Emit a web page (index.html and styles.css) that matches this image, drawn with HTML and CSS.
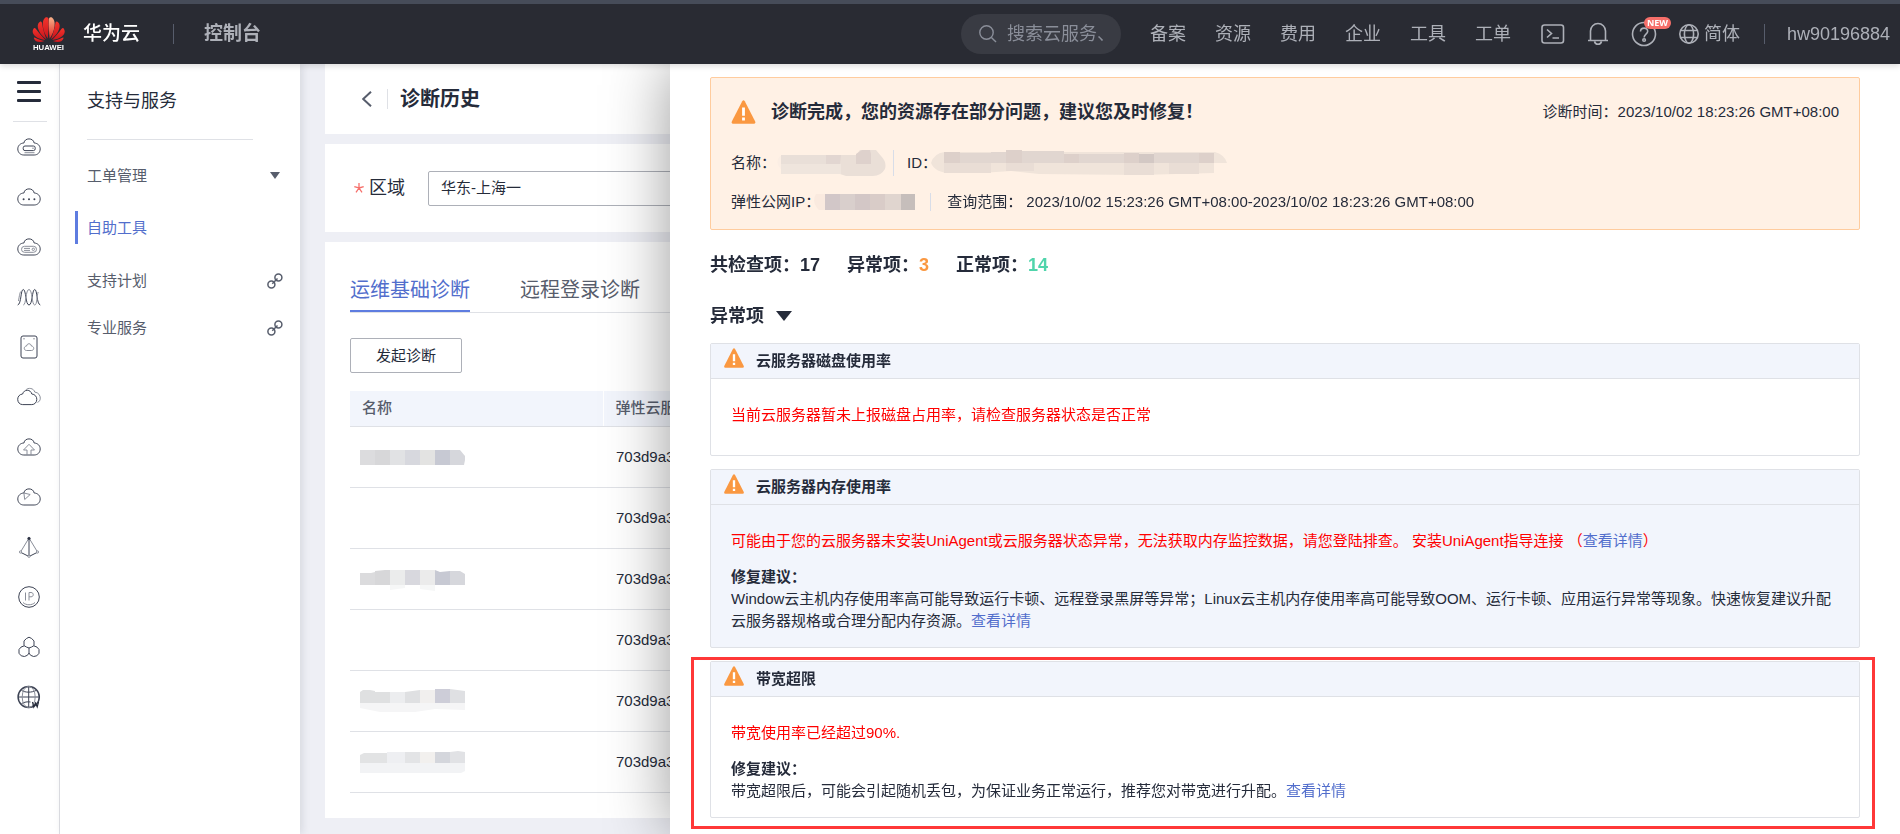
FILE: index.html
```html
<!DOCTYPE html>
<html lang="zh-CN">
<head>
<meta charset="utf-8">
<title>诊断历史</title>
<link rel="stylesheet" href="styles.css">
</head>
<body>
<svg class="defs" aria-hidden="true">
  <symbol id="cloud" viewBox="0 0 24 24"><path d="M6.900 8C7.400 5.200 9.400 3.900 12 3.900s4.600 1.300 5.200 4.100c3.600.2 6 2.700 6 5.900 0 3.600-2.600 6.100-6 6.100H6.800c-3.400 0-6-2.500-6-6.100 0-3.200 2.600-5.800 6.100-5.900z"/></symbol>
  <symbol id="link" viewBox="0 0 16 16"><circle cx="11.400" cy="4.600" r="3.500"/><circle cx="4.400" cy="11.600" r="3.500"/><path d="M5.300 10.700l5.200-5.200"/></symbol>
  <symbol id="warn" viewBox="0 0 24 24"><path fill="#fa9841" d="M10.700 1.200Q12 -.8 13.300 1.200L23.700 21.600Q24.300 23.700 22.300 23.700H1.700Q-.3 23.700 .3 21.600Z"/><path fill="#fff" d="M10.600 7.500h2.800v8.300h-2.800zM10.600 17.600h2.800v2.900h-2.800z"/></symbol>
</svg>

<header class="topbar">
  <a class="brand" href="#">
    <svg class="logo" viewBox="0 0 34 36" aria-hidden="true">
      <defs>
        <linearGradient id="petal" x1="0" y1="0" x2="0" y2="1"><stop offset="0" stop-color="#f4352c"/><stop offset="1" stop-color="#c8141c"/></linearGradient>
        <linearGradient id="petal-lit" x1="0" y1="0" x2="0" y2="1"><stop offset="0" stop-color="#f9b48c"/><stop offset="1" stop-color="#e5251f"/></linearGradient>
      </defs>
      <g fill="url(#petal)">
        <path d="M16.200 22.600C10.500 14.600 9.300 3.800 13.800 .9c2.600-.8 3.200.4 3.300 2.200.3 7.500-.2 13.600-.9 19.500z"/>
        <path fill="url(#petal-lit)" d="M18.200 22.600C23.900 14.600 25.100 3.800 20.600.9 18 .1 17.500 1.300 17.400 3.100c-.3 7.500.1 13.600.8 19.500z"/>
        <path d="M14.900 23.500C8.300 19 4.300 11.500 6.500 7.300 9.100 3.700 10 5.500 10.300 6.900c1 5.800 2.500 11.300 4.600 16.600z"/>
        <path d="M19.500 23.500C26.100 19 30.100 11.500 27.900 7.300 25.300 3.700 24.400 5.500 24.100 6.900c-1 5.800-2.500 11.300-4.600 16.600z"/>
        <path d="M13.700 24.300C6 23.400 .2 19.300.7 15c.9-4.200 2.100-3.500 3.200-2.300 3 4.200 6.200 8 9.800 11.600z"/>
        <path d="M20.700 24.300c7.700-.9 13.500-5 13-9.300-.9-4.200-2.100-3.500-3.200-2.300-3 4.200-6.200 8-9.800 11.600z"/>
        <path d="M12.900 25.200c-4.800 2.100-9.600 1.400-10.900-2.800-.3-1.100.6-.9 1.700-.3 2.900 1.500 5.800 2.500 9.200 3.100z"/>
        <path d="M21.500 25.200c4.800 2.100 9.600 1.400 10.900-2.800.3-1.100-.6-.9-1.700-.3-2.900 1.500-5.800 2.500-9.200 3.100z"/>
      </g>
      <text x="17" y="35" text-anchor="middle" class="logo-text">HUAWEI</text>
    </svg>
    <span class="brand-name">华为云</span>
  </a>
  <a class="console" href="#">控制台</a>
  <label class="search">
    <svg class="icon line" width="18" height="18" viewBox="0 0 18 18" aria-hidden="true"><circle cx="7.500" cy="7.500" r="6.700"/><path d="M12.400 12.400L17 17"/></svg>
    <input type="text" aria-label="搜索" placeholder="搜索云服务、">
  </label>
  <nav class="topnav">
    <a href="#">备案</a><a href="#">资源</a><a href="#">费用</a><a href="#">企业</a><a href="#">工具</a><a href="#">工单</a>
  </nav>
  <div class="tools">
    <button aria-label="命令行"><svg class="icon bold" width="24" height="20" viewBox="0 0 24 20"><rect x="1" y="1" width="21.500" height="18" rx="2.500"/><path d="M6 5.500l4.500 4L6 13.500M11.500 14h6.500"/></svg></button>
    <button aria-label="消息"><svg class="icon bold" width="22" height="24" viewBox="0 0 22 24"><path d="M1 18.500h20M3.500 18.300V9a7.500 7.500 0 0 1 15 0v9.300M7.500 19.500a3.600 3.600 0 0 0 7 0"/></svg></button>
    <button class="help" aria-label="帮助"><svg class="icon bold" width="26" height="26" viewBox="0 0 26 26"><circle cx="13" cy="13" r="11.500"/><path d="M9.500 10.600c0-4.600 7.200-4.600 7.200-.3 0 3-3.600 2.900-3.600 6.300"/><circle cx="13.100" cy="19" r="1.300"/></svg><span class="badge">NEW</span></button>
    <button class="lang"><svg class="icon bold" width="20" height="20" viewBox="0 0 20 20" aria-hidden="true"><circle cx="10" cy="10" r="9.200"/><ellipse cx="10" cy="10" rx="4.600" ry="9.200"/><path d="M1.800 6.500h16.400M1.800 13.500h16.400"/></svg>简体</button>
  </div>
  <a class="account" href="#">hw90196884</a>
</header>

<div class="page">
  <nav class="rail" aria-label="服务">
    <button class="menu" aria-label="菜单"><i></i><i></i><i></i></button>
    <ul>
      <li><a href="#" aria-label="弹性云服务器"><svg class="ri" viewBox="0 0 24 24"><use href="#cloud"/><rect x="6.200" y="11" width="12" height="4.600" rx="1.800"/><path class="thin" d="M7.500 17.700h10"/><path d="M15.500 13.200h1"/></svg></a></li>
      <li><a href="#" aria-label="云服务"><svg class="ri" viewBox="0 0 24 24"><use href="#cloud"/><path class="dots" d="M6.600 14.200h.01M12 14.200h.01M17.400 14.200h.01"/></svg></a></li>
      <li><a href="#" aria-label="裸金属服务器"><svg class="ri" viewBox="0 0 24 24"><use href="#cloud"/><rect class="thin" x="4.500" y="11.300" width="15" height="6" rx="3"/><path class="thin" d="M7 13.400h6M7 15.400h6"/><circle class="thin" cx="16.300" cy="14.300" r="1.200"/></svg></a></li>
      <li><a href="#" aria-label="弹性伸缩"><svg class="ri" viewBox="0 0 24 24"><path d="M.7 20C4.500 19 3.500 4.500 6.300 4.500S8.500 20 12 20 15 4.500 17.700 4.500 19.500 19 23.300 20"/><path class="thin" d="M1.500 16C2.500 10 3 6 4.500 6.500M6.300 20c3 0 2.200-15.500 5.700-15.500S14.700 20 17.700 20c2.500 0 2-9 3.500-13"/></svg></a></li>
      <li><a href="#" aria-label="云硬盘"><svg class="ri" viewBox="0 0 24 24"><rect x="4" y="1" width="16" height="22" rx="2"/><path d="M6.500 3.800h1M16.500 3.800h1"/><path class="thin" d="M9.600 11c.4-3 4.400-3 4.800 0 3.200.4 3 4.500 0 4.500H9.600c-3 0-3.200-4.200 0-4.500z"/></svg></a></li>
      <li><a href="#" aria-label="专属云"><svg class="ri" viewBox="0 0 24 24"><path d="M5.600 9c.8-2.600 2.600-3.700 4.700-3.700S14.200 6.600 14.800 9c3 .2 5 2.500 5 5.300 0 3.100-2.200 5.300-5 5.300H5.700c-2.900 0-5-2.200-5-5.300C.7 11.500 2.700 9.200 5.600 9z"/><path class="thin" d="M8.500 5.300c2.800-3.300 8.300-2.100 9.300 1.800 3.800.3 5.500 3.600 5.500 6.100 0 2-1.100 3.600-2.800 4.200"/></svg></a></li>
      <li><a href="#" aria-label="对象存储"><svg class="ri" viewBox="0 0 24 24"><use href="#cloud"/><path class="thin" d="M10 20v-5H6.500L12 9.300l5.500 5.700H14v5"/></svg></a></li>
      <li><a href="#" aria-label="云监控"><svg class="ri" viewBox="0 0 24 24"><use href="#cloud"/><path class="thin" d="M6.900 8l6.300 1.500-5.500 5z"/></svg></a></li>
      <li><a href="#" aria-label="虚拟私有云"><svg class="ri" viewBox="0 0 24 24"><path d="M12 3v18M4 17.500l8 4 8-4"/><path class="thin" d="M12 3L3.500 17M12 3l8.500 14"/><circle class="solid" cx="12" cy="3.500" r="1.200"/><circle class="node" cx="3.500" cy="17" r="1.100"/><circle class="node" cx="20.500" cy="17" r="1.100"/><circle class="node" cx="12" cy="21.300" r="1.100"/></svg></a></li>
      <li><a href="#" aria-label="弹性公网IP"><svg class="ri" viewBox="0 0 24 24"><circle cx="12" cy="12" r="10.300"/><path class="thin" d="M8.500 7.500v8M12 15.500v-8h2c3 0 3 4.300 0 4.300h-2M6 17.500c3 3 9 3 12 0"/></svg></a></li>
      <li><a href="#" aria-label="区块链"><svg class="ri" viewBox="0 0 24 24"><path d="M9.500 3.500L12 2.200l2.600 1.300 2.400 2.400v4.700L14.600 12 12 13l-2.600-1L7 10.600V5.900zM7 10.900l-3 1.200-2 2.400v3.800l2.200 2.500 3.200.7 3-1.200L12 18v-5M17 10.900l3 1.200 2 2.400v3.800l-2.200 2.500-3.200.7-3-1.200L12 18"/></svg></a></li>
      <li><a href="#" aria-label="域名"><svg class="ri" viewBox="0 0 24 24"><circle class="ring" cx="11.700" cy="12" r="10.600"/><path d="M11.700 1.400v21.200M1.100 12h21.200M4.500 5.500c4 2.200 10 2.200 14.500 0M4.500 18.500c3-1.500 6-2 9-1.500"/><ellipse class="thin" cx="11.700" cy="12" rx="6.500" ry="10.600"/><path class="w" d="M15.500 17l1.300 5 1.700-4 1.700 4 1.300-5"/></svg></a></li>
    </ul>
  </nav>

  <aside class="panel">
    <h2>支持与服务</h2>
    <ul>
      <li class="lead"><a href="#">工单管理<svg class="caret" width="10" height="7" viewBox="0 0 10 7" aria-hidden="true"><path d="M0 0h10L5 7z"/></svg></a></li>
      <li class="current"><a href="#">自助工具</a></li>
      <li class="after"><a href="#">支持计划<svg class="chain"><use href="#link"/></svg></a></li>
      <li><a href="#">专业服务<svg class="chain"><use href="#link"/></svg></a></li>
    </ul>
  </aside>

  <main class="main">
    <section class="card title-card">
      <button class="back" aria-label="返回"><svg width="10" height="16" viewBox="0 0 10 16"><path d="M9 .7L1.200 8 9 15.300"/></svg></button>
      <h1>诊断历史</h1>
    </section>
    <section class="card region-card">
      <label for="region"><svg class="star" width="10" height="10" viewBox="0 0 10 10" aria-hidden="true"><path d="M5 0v5L.3 3.700M5 5l4.700-1.300M5 5L2 9.300M5 5l3 4.300"/></svg>区域</label>
      <select id="region"><option>华东-上海一</option></select>
    </section>
    <section class="card list-card">
      <div class="tabs"><button class="tab on">运维基础诊断</button><button class="tab">远程登录诊断</button></div>
      <button class="start">发起诊断</button>
      <table>
        <thead><tr><th class="c-name">名称</th><th>弹性云服务器</th></tr></thead>
        <tbody>
          <tr><td><svg class="mosaic" viewBox="0 0 105 22"><g><path fill="#dcdcde" d="M0 4h15v15H0z"/><path fill="#d7d7d9" d="M15 4h15v15H15z"/><path fill="#e1e2e4" d="M30 4h15v15H30z"/><path fill="#d7d8de" d="M45 4h15v15H45z"/><path fill="#e3e3e2" d="M60 4h15v15H60z"/><path fill="#c7c9d3" d="M75 4h15v15H75z"/><path fill="#d6d7dc" d="M90 4h10l5 6v4l-1 5H90z"/></g></svg></td><td>703d9a3b</td></tr>
          <tr><td></td><td>703d9a3b</td></tr>
          <tr><td><svg class="mosaic" viewBox="0 0 105 22"><path fill="#dbdbdd" d="M0 5h11l4-1v13H0z"/><path fill="#d7d7d9" d="M15 3l10-1h5v15H15z"/><path fill="#ebecec" d="M30 2h15v15H30z"/><path fill="#d8d8de" d="M45 2h15v15H45z"/><path fill="#ebebeb" d="M60 2h15v15H60z"/><path fill="#c7c9d3" d="M75 2l5 2 10-1v14H75z"/><path fill="#d6d7dc" d="M90 3h10l5 3v11H90z"/><path fill="#f6f7f7" d="M30 17h15v3l-15 2zM60 17h15v6l-15-2z"/></svg></td><td>703d9a3b</td></tr>
          <tr><td></td><td>703d9a3b</td></tr>
          <tr><td><svg class="mosaic" viewBox="0 0 105 22"><path fill="#dfe0e1" d="M0 2l3-2h7l5 1v12H0zM15 2h15v11H15z"/><path fill="#ecedef" d="M30 2h15v11H30z"/><path fill="#dfe0e2" d="M45 2l15-2v13H45z"/><path fill="#f1efee" d="M60 0h15v13H60z"/><path fill="#cdcdd8" d="M75-1h15v14H75z"/><path fill="#dfe0e3" d="M90-1l15 2v12H90z"/><path fill="#f5f5f6" d="M0 13h105v7l-30-1-20 3H20L0 18z"/></svg></td><td>703d9a3b</td></tr>
          <tr><td><svg class="mosaic" viewBox="0 0 105 22"><path fill="#e2e3e4" d="M0 4l4-2h23v10H0z"/><path fill="#eeeff2" d="M27 1h18v11H27z"/><path fill="#e3e4e6" d="M45 1h15v11H45z"/><path fill="#f2f0ee" d="M60 1h15v11H60z"/><path fill="#d4d6dc" d="M75 1h15v11H75z"/><path fill="#e1e2e5" d="M90 1l8-1 7 1v11H90z"/><path fill="#f2f3f5" d="M0 12h105v8l-4 2H0z"/></svg></td><td>703d9a3b</td></tr>
        </tbody>
      </table>
    </section>
  </main>
</div>

<section class="drawer" role="dialog" aria-label="诊断报告">
  <div class="alert">
    <div class="alert-head">
      <svg class="warn-lg" aria-hidden="true"><use href="#warn"/></svg>
      <h2>诊断完成，您的资源存在部分问题，建议您及时修复！</h2>
      <p>诊断时间：2023/10/02 18:23:26 GMT+08:00</p>
    </div>
    <div class="meta">
      <span class="name-field">名称：<svg class="m-name" viewBox="0 0 110 28"><path fill="#fbeee4" d="M4 7h20v14H6Q-2 14 4 7z"/><path fill="#e9dfd8" d="M5 6h45v9H5z"/><path fill="#e2d6d1" d="M50 6h15v9H50z"/><path fill="#eadfd7" d="M65 6h15l4-5h16l5 6q6 6 4 13-4 7-12 7H70l-6-2V15z"/><path fill="#ded1cc" d="M80 5l6-4h8l1 4v10H80z"/><path fill="#efe5dd" d="M5 15h60v10H5z"/></svg></span>
      <span class="id-field">ID：<svg class="m-id" viewBox="0 0 296 26"><path fill="#f0e4da" d="M0 13Q3 3 14 2h270q10 3 12 11h-13v10l-75 2-100-1H108L80 21l-30 2H20Q4 23 0 13z"/><path fill="#ddd0ca" d="M13 2h16v11H13zM75 0h16v13H75zM133 4h15v9h-15zM193 3h15v10h-15zM268 3h15v10h-15z"/><path fill="#e1d6d0" d="M29 3h31v10H29zM60 2h15v11H60zM91 1h42v12H91zM148 4h45v9h-45zM223 3h45v10h-45z"/><path fill="#d3c8c4" d="M208 4h15v9h-15z"/><path fill="#e9ddd5" d="M13 13h47v10H13zM75 13h28v8H75zM193 13h30v12h-30zM238 13h30v11h-30z"/></svg></span>
    </div>
    <div class="meta">
      <span class="ip-field">弹性公网IP：<svg class="m-ip" viewBox="0 0 102 16"><path fill="#faeadf" d="M2 0h10v16H5Q-3 8 2 0z"/><path fill="#d2c7c8" d="M11 0h15v16H11z"/><path fill="#d9cfcc" d="M26 0h15v16H26z"/><path fill="#d3c7c6" d="M41 0h15v16H41z"/><path fill="#d9ccc8" d="M56 0h15v16H56z"/><path fill="#e0d5cf" d="M71 0h16v16H71z"/><path fill="#c6bebb" d="M87 0h14v16H87z"/></svg></span>
      <span class="range-field">查询范围： 2023/10/02 15:23:26 GMT+08:00-2023/10/02 18:23:26 GMT+08:00</span>
    </div>
  </div>
  <div class="stats">
    <span>共检查项：17</span><span>异常项：<b class="bad">3</b></span><span>正常项：<b class="good">14</b></span>
  </div>
  <button class="group">异常项<svg width="16" height="10" viewBox="0 0 16 10" aria-hidden="true"><path d="M0 0h16L8 10z"/></svg></button>
  <div class="items">
    <article class="item">
      <h3><svg class="warn-sm" aria-hidden="true"><use href="#warn"/></svg>云服务器磁盘使用率</h3>
      <div class="item-body"><p class="err">当前云服务器暂未上报磁盘占用率，请检查服务器状态是否正常</p></div>
    </article>
    <article class="item hover">
      <h3><svg class="warn-sm" aria-hidden="true"><use href="#warn"/></svg>云服务器内存使用率</h3>
      <div class="item-body">
        <p class="err">可能由于您的云服务器未安装UniAgent或云服务器状态异常，无法获取内存监控数据，请您登陆排查。 安装UniAgent指导连接 （<a href="#">查看详情</a>）</p>
        <h4>修复建议：</h4>
        <p>Window云主机内存使用率高可能导致运行卡顿、远程登录黑屏等异常；Linux云主机内存使用率高可能导致OOM、运行卡顿、应用运行异常等现象。快速恢复建议升配云服务器规格或合理分配内存资源。<a href="#">查看详情</a></p>
      </div>
    </article>
    <article class="item marked">
      <h3><svg class="warn-sm" aria-hidden="true"><use href="#warn"/></svg>带宽超限</h3>
      <div class="item-body">
        <p class="err">带宽使用率已经超过90%.</p>
        <h4>修复建议：</h4>
        <p>带宽超限后，可能会引起随机丢包，为保证业务正常运行，推荐您对带宽进行升配。<a href="#">查看详情</a></p>
      </div>
    </article>
  </div>
</section>
</body>
</html>
```
FILE: styles.css
```css
* { box-sizing: border-box; }
body, h1, h2, h3, h4, p, ul { margin: 0; padding: 0; }
ul { list-style: none; }
body {
  font: 400 15px/22px "Liberation Sans", "Noto Sans CJK SC", sans-serif;
  color: #252b3a;
  background: #eeeff5;
  overflow: hidden;
}
button, input, select { font: inherit; color: inherit; border: 0; background: none; padding: 0; }
button { cursor: pointer; }
a { color: #526ecc; text-decoration: none; }
svg { display: block; flex: none; }
.defs { position: absolute; width: 0; height: 0; }

/* top bar */
.topbar {
  position: relative; z-index: 3;
  display: flex; align-items: center;
  height: 64px; padding: 0 10px 0 32px;
  border-top: 4px solid #464c59;
  background: #292b33; color: #adb0b8;
  box-shadow: 0 2px 6px rgba(0, 0, 0, .15);
  font-size: 18px; white-space: nowrap;
}
.topbar a { color: inherit; }
.topbar .brand { display: flex; align-items: center; gap: 18px; color: #fff; font-size: 19px; font-weight: 500; }
.logo { width: 33px; height: 36px; }
.logo-text { font: 700 8px "Liberation Sans", sans-serif; fill: #fff; }
.console { margin-left: 33px; padding-left: 30px; border-left: 1px solid #575d6c; font-size: 19px; line-height: 20px; font-weight: 700; }
.search {
  display: flex; align-items: center; gap: 10px;
  width: 160px; height: 40px; margin-left: auto; padding: 0 18px;
  border-radius: 20px; background: #393b43;
}
.search input { width: 100%; min-width: 0; outline: 0; }
.search input::placeholder { color: #8a8e99; opacity: 1; }
.icon { fill: none; stroke: #adb0b8; stroke-width: 1.400; }
.bold { stroke-width: 1.600; }
.search .icon { stroke: #8a8e99; }
.topnav { display: flex; gap: 29px; margin-left: 29px; }
.tools { display: flex; align-items: center; gap: 22px; margin-left: 30px; }
.help { position: relative; }
.badge {
  position: absolute; left: 13px; top: -4px;
  padding: 0 3px; border-radius: 6px;
  background: #f66f6a; color: #fff;
  font: 700 9px/12px "Open Sans", sans-serif;
}
.lang { display: flex; align-items: center; gap: 5px; }
.account { margin-left: 24px; padding-left: 22px; border-left: 1px solid #575d6c; line-height: 20px; }

/* left navigation */
.page { display: flex; height: calc(100vh - 64px); }
.rail { flex: none; width: 60px; background: #fff; border-right: 1px solid #dfe1e6; }
.menu { display: flex; flex-direction: column; gap: 6px; width: 34px; height: 58px; margin: 0 0 0 13px; padding: 17px 6px 0 4px; border-bottom: 1px solid #dfe1e6; }
.menu i { flex: none; height: 3px; background: #252b3a; border-radius: 1px; }
.rail ul { padding: 0 0 0 17px; }
.rail li { height: 50px; display: flex; align-items: center; }
.ri { width: 24px; height: 24px; fill: none; stroke: #3d4354; stroke-width: 1; }
.ri .thin { stroke: #8a8e99; }
.ri .solid { fill: #252b3a; }
.ri .node { fill: #fff; stroke: #8a8e99; }
.ri .dots { stroke-width: 2; stroke-linecap: round; }
.ri .ring { stroke-width: 1.500; }
.ri .w { stroke-width: 1.200; stroke: #252b3a; }
.panel { position: relative; z-index: 1; flex: none; width: 240px; padding: 0 16px 0 27px; background: #fff; box-shadow: 2px 0 8px rgba(37, 43, 58, .12); }
.panel h2 { width: 166px; height: 76px; padding-top: 26px; border-bottom: 1px solid #dfe1e6; font-size: 18px; font-weight: 400; }
.panel a { display: flex; align-items: center; justify-content: space-between; height: 33px; color: #575d6c; }
.panel li { margin-top: 14px; }
.panel .lead { margin-top: 19px; }
.panel .current { margin: 19px 0 0 -12px; padding-left: 9px; border-left: 3px solid #5e7ce0; }
.panel .current a { color: #526ecc; }
.panel .after { margin-top: 20px; }
.caret { fill: #575d6c; margin-right: 4px; }
.chain { width: 16px; height: 16px; fill: none; stroke: #575d6c; stroke-width: 1.500; margin-right: 1px; }

/* history page */
.main { flex: 1; min-width: 0; padding-left: 25px; display: flex; flex-direction: column; gap: 10px; }
.card { background: #fff; }
.title-card { display: flex; align-items: center; height: 70px; padding-left: 37px; }
.back { padding-right: 15px; fill: none; stroke: #575d6c; stroke-width: 2; }
h1 { padding-left: 12px; border-left: 1px solid #dfe1e6; font-size: 20px; line-height: 20px; }
.region-card { display: flex; align-items: center; gap: 23px; height: 88px; padding-left: 29px; }
.region-card label { display: flex; align-items: center; gap: 5px; font-size: 18px; }
.star { fill: none; stroke: #f66f6a; stroke-width: 1.300; }
select { appearance: none; width: 400px; height: 35px; padding: 0 12px; border: 1px solid #adb0b8; border-radius: 2px; }
.list-card { padding: 25px 25px 25px; }
.tabs { display: flex; gap: 50px; border-bottom: 1px solid #dfe1e6; height: 46px; }
.tab { font-size: 20px; line-height: 46px; color: #575d6c; }
.tab.on { color: #526ecc; border-bottom: 2px solid #5e7ce0; }
.start { width: 112px; height: 35px; margin: 25px 0 18px; border: 1px solid #adb0b8; border-radius: 2px; }
table { width: 100%; border-collapse: collapse; table-layout: fixed; }
th { height: 35px; padding: 0 12px; background: #f2f5fc; border-bottom: 1px solid #dfe1e6; text-align: left; font-weight: 500; color: #575d6c; }
th + th { border-left: 1px solid #fff; }
.c-name { width: 253px; }
td { height: 61px; padding: 0 13px; border-bottom: 1px solid #dfe1e6; }
td:first-child { padding-left: 10px; }
.mosaic { width: 105px; height: 22px; overflow: visible; }

/* report drawer */
.drawer {
  position: fixed; z-index: 2; left: 670px; right: 0; top: 64px; bottom: 0;
  padding: 13px 40px 0; background: #fff;
  box-shadow: 0 0 60px rgba(0, 0, 0, .4);
}
.alert { padding: 22px 20px 16px; border: 1px solid #ffcc9e; border-radius: 2px; background: #fff1e5; }
.alert-head { display: flex; align-items: center; height: 24px; }
.warn-lg { width: 25px; height: 24px; }
.alert h2 { flex: 1; padding-left: 15px; font-size: 18px; }
.meta { display: flex; align-items: center; height: 22px; margin-top: 28px; }
.meta + .meta { margin-top: 17px; }
.meta span { display: flex; align-items: center; white-space: pre; }
.meta span + span { border-left: 1px solid #d8dde8; line-height: 18px; }
.id-field { margin-left: 7px; padding-left: 13px; }
.range-field { margin-left: 14px; padding-left: 16px; }
.m-name { width: 110px; height: 28px; }
.m-id { width: 296px; height: 26px; margin-left: -6px; }
.m-ip { width: 102px; height: 16px; margin-left: -6px; }
.stats { display: flex; gap: 27px; margin-top: 24px; font-size: 18px; font-weight: 700; }
.bad { color: #fa9841; }
.good { color: #50d4ab; }
.group { display: flex; align-items: center; gap: 12px; margin: 29px 0 16px; font-size: 18px; font-weight: 700; fill: #252b3a; }
.items { display: flex; flex-direction: column; gap: 13px; }
.item { position: relative; border: 1px solid #dfe1e6; border-radius: 2px; }
.item h3 { display: flex; gap: 12px; height: 35px; padding: 4px 13px; border-bottom: 1px solid #dfe1e6; background: #f2f5fc; font-size: 15px; line-height: 26px; }
.warn-sm { width: 20px; height: 20px; }
.item-body { padding: 25px 20px 15px; }
.err { margin-bottom: 14px; color: #f00; }
h4 { font-size: 15px; }
.hover { background: #f2f5fc; }
.marked::after { content: ""; position: absolute; inset: -5px -16px -12px -20px; border: 3px solid #ff3838; pointer-events: none; }
```
